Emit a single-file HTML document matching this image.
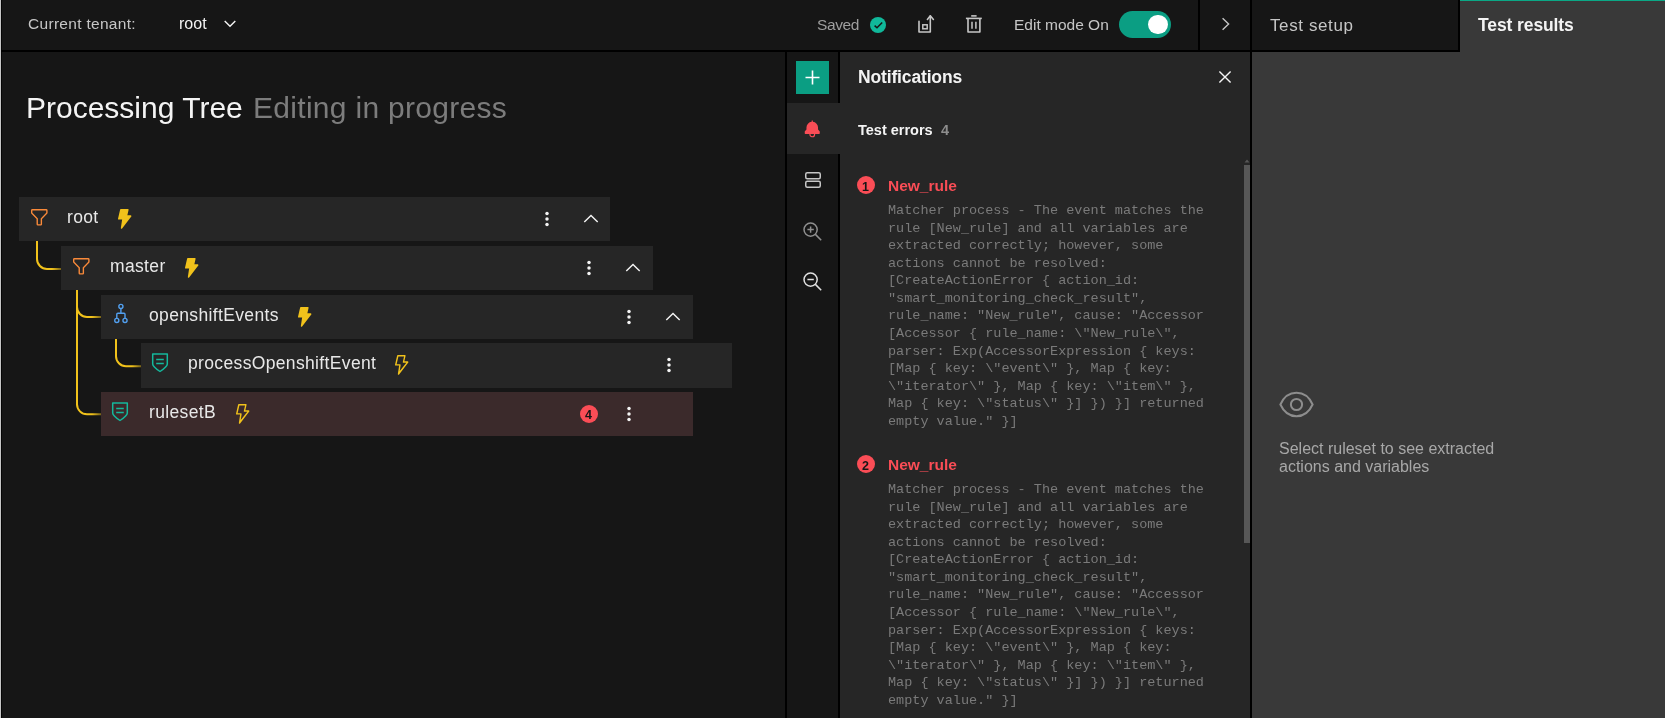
<!DOCTYPE html>
<html><head><meta charset="utf-8">
<style>
html,body{margin:0;padding:0;}
body{width:1665px;height:718px;overflow:hidden;background:#161616;position:relative;font-family:"Liberation Sans",sans-serif;}
.a{position:absolute;}
.t{position:absolute;line-height:1;white-space:nowrap;will-change:transform;}
.blk{position:absolute;background:#000;}
svg{position:absolute;overflow:visible;}
.row{position:absolute;height:44px;width:592px;background:#262626;}
.rt{position:absolute;will-change:transform;line-height:1;white-space:nowrap;font-size:17.5px;color:#e8e8e8;letter-spacing:0.35px;}
.mono{position:absolute;will-change:transform;left:888px;font-family:"Liberation Mono",monospace;font-size:13.5px;line-height:17.58px;color:#7a7a7a;white-space:pre;}
</style></head>
<body>
<!-- left edge -->
<div class="a" style="left:0;top:0;width:1px;height:718px;background:#c6c6c6"></div>
<div class="a" style="left:1px;top:0;width:1px;height:718px;background:#050505"></div>

<!-- header -->
<div class="t" style="left:27.8px;top:15.9px;font-size:15.5px;color:#c6c6c6;letter-spacing:0.3px">Current tenant:</div>
<div class="t" style="left:178.6px;top:15.5px;font-size:16px;color:#f4f4f4">root</div>
<svg style="left:224px;top:20px" width="12" height="8" viewBox="0 0 12 8"><path d="M0.7 0.9 L6 6.3 L11.3 0.9" fill="none" stroke="#f4f4f4" stroke-width="1.4"/></svg>

<div class="t" style="left:817.3px;top:16.9px;font-size:15.5px;color:#9e9e9e;letter-spacing:-0.4px">Saved</div>
<svg style="left:869.6px;top:16.8px" width="16" height="16" viewBox="0 0 16 16"><circle cx="8" cy="8" r="8" fill="#10b89a"/><path d="M4.6 8.6 L7 10.8 L12.2 5.5" fill="none" stroke="#161616" stroke-width="1.5"/></svg>
<!-- export icon -->
<svg style="left:912px;top:10px" width="28" height="28" viewBox="0 0 28 28"><path d="M7 11.2 V22 H18.3 V6" fill="none" stroke="#c6c6c6" stroke-width="1.6" stroke-linejoin="round" stroke-linecap="round"/><path d="M15.4 9.4 L18.3 5.8 L21.4 9.4" fill="none" stroke="#c6c6c6" stroke-width="1.6" stroke-linejoin="round" stroke-linecap="round"/><rect x="10.8" y="14.8" width="4.4" height="4.0" fill="none" stroke="#c6c6c6" stroke-width="1.5"/></svg>
<!-- trash icon -->
<svg style="left:960px;top:10px" width="28" height="28" viewBox="0 0 28 28"><path d="M11.2 5.9 H16.6" stroke="#c6c6c6" stroke-width="1.6"/><path d="M5.9 8.4 H21.8" stroke="#c6c6c6" stroke-width="1.6"/><path d="M8 8.4 V22 H19.9 V8.4" fill="none" stroke="#c6c6c6" stroke-width="1.6" stroke-linejoin="round"/><path d="M12 11.7 V18.7 M15.9 11.7 V18.7" stroke="#c6c6c6" stroke-width="1.5"/></svg>

<div class="t" style="left:1014px;top:16.9px;font-size:15.5px;color:#c6c6c6;letter-spacing:0px">Edit mode On</div>
<div class="a" style="left:1119px;top:11px;width:52px;height:27px;border-radius:14px;background:#0b9e83"></div>
<div class="a" style="left:1148px;top:14.8px;width:19.6px;height:19.6px;border-radius:50%;background:#fff"></div>

<div class="blk" style="left:1198px;top:0;width:2px;height:50px"></div>
<svg style="left:1216px;top:16px" width="16" height="16" viewBox="0 0 16 16"><path d="M6.6 2.2 L12.6 8 L6.6 13.8" fill="none" stroke="#c6c6c6" stroke-width="1.4"/></svg>
<div class="blk" style="left:1250px;top:0;width:2px;height:718px"></div>

<div class="t" style="left:1269.6px;top:17.4px;font-size:17px;color:#c6c6c6;letter-spacing:0.6px">Test setup</div>
<div class="blk" style="left:1458px;top:0;width:2px;height:52px"></div>
<div class="a" style="left:1460px;top:0;width:205px;height:718px;background:#393939"></div>
<div class="a" style="left:1460px;top:0;width:205px;height:1px;background:#0ba886"></div>
<div class="t" style="left:1478px;top:16.8px;font-size:17.5px;font-weight:700;color:#f4f4f4;letter-spacing:-0.1px">Test results</div>

<!-- header bottom border -->
<div class="blk" style="left:1px;top:50px;width:1459px;height:2px"></div>

<!-- tree area -->
<div class="blk" style="left:785px;top:52px;width:2px;height:666px"></div>
<div class="t" style="left:25.5px;top:92.6px;font-size:30px;color:#f4f4f4">Processing Tree</div>
<div class="t" style="left:253px;top:92.6px;font-size:30px;color:#7c7c7c;letter-spacing:0.3px">Editing in progress</div>

<!-- tree connectors -->
<svg style="left:0;top:0" width="800" height="500" viewBox="0 0 800 500"><defs><linearGradient id="g0" gradientUnits="userSpaceOnUse" x1="52" y1="0" x2="61" y2="0"><stop offset="0" stop-color="#f1c21b"/><stop offset="1" stop-color="#f1c21b" stop-opacity="0.45"/></linearGradient><linearGradient id="g1" gradientUnits="userSpaceOnUse" x1="92" y1="0" x2="101" y2="0"><stop offset="0" stop-color="#f1c21b"/><stop offset="1" stop-color="#f1c21b" stop-opacity="0.45"/></linearGradient><linearGradient id="g2" gradientUnits="userSpaceOnUse" x1="92" y1="0" x2="101" y2="0"><stop offset="0" stop-color="#f1c21b"/><stop offset="1" stop-color="#f1c21b" stop-opacity="0.45"/></linearGradient><linearGradient id="g3" gradientUnits="userSpaceOnUse" x1="132" y1="0" x2="141" y2="0"><stop offset="0" stop-color="#f1c21b"/><stop offset="1" stop-color="#f1c21b" stop-opacity="0.45"/></linearGradient></defs><g fill="none" stroke-width="2"><path d="M37 241 V259 A10 10 0 0 0 47 269 H62" stroke="url(#g0)"/><path d="M77 290 V404.3 A10 10 0 0 0 87 414.3 H102" stroke="url(#g1)"/><path d="M77 307 A10 10 0 0 0 87 317 H102" stroke="url(#g2)"/><path d="M116 338.5 V356.2 A10 10 0 0 0 126 366.2 H142" stroke="url(#g3)"/></g></svg>
<div class="row" style="left:19px;top:197px;width:591px;background:#262626"></div>
<svg style="left:30.50px;top:209.30px" width="16.6" height="16.6" viewBox="4 4 24 24"><path d="M18,28H14a2,2,0,0,1-2-2V18.41L4.59,11A2,2,0,0,1,4,9.59V6A2,2,0,0,1,6,4H26a2,2,0,0,1,2,2V9.59A2,2,0,0,1,27.41,11L20,18.41V26A2,2,0,0,1,18,28ZM6,6V9.59l8,8V26h4V17.59l8-8V6Z" fill="#fa8a3a"/></svg>
<div class="rt" style="left:66.7px;top:209.00px">root</div>
<svg style="left:117.7px;top:209.1px" width="13.4" height="19.8" viewBox="7 2 18.9 28"><path d="M11.61,29.92a1,1,0,0,1-.6-1.07L12.83,17H8a1,1,0,0,1-1-1.23l3-13A1,1,0,0,1,11,2H21a1,1,0,0,1,.98,1.2L20.22,11H25a1,1,0,0,1,.78,1.62l-13,17A1,1,0,0,1,12,30,1.1,1.1,0,0,1,11.61,29.92Z" fill="#f1c21b"/></svg>
<svg style="left:544px;top:210px" width="6" height="18" viewBox="0 0 6 18"><circle cx="3" cy="3.5" r="1.75" fill="#f4f4f4"/><circle cx="3" cy="9" r="1.75" fill="#f4f4f4"/><circle cx="3" cy="14.5" r="1.75" fill="#f4f4f4"/></svg>
<svg style="left:583px;top:212.00px" width="16" height="16" viewBox="0 0 16 16"><path d="M1.3 10.1 L8 3.4 L14.7 10.1" fill="none" stroke="#f4f4f4" stroke-width="1.4"/></svg>
<div class="row" style="left:61px;top:245.75px;width:592px;background:#262626"></div>
<svg style="left:72.50px;top:258.05px" width="16.6" height="16.6" viewBox="4 4 24 24"><path d="M18,28H14a2,2,0,0,1-2-2V18.41L4.59,11A2,2,0,0,1,4,9.59V6A2,2,0,0,1,6,4H26a2,2,0,0,1,2,2V9.59A2,2,0,0,1,27.41,11L20,18.41V26A2,2,0,0,1,18,28ZM6,6V9.59l8,8V26h4V17.59l8-8V6Z" fill="#fa8a3a"/></svg>
<div class="rt" style="left:109.5px;top:257.75px">master</div>
<svg style="left:184.7px;top:257.85px" width="13.4" height="19.8" viewBox="7 2 18.9 28"><path d="M11.61,29.92a1,1,0,0,1-.6-1.07L12.83,17H8a1,1,0,0,1-1-1.23l3-13A1,1,0,0,1,11,2H21a1,1,0,0,1,.98,1.2L20.22,11H25a1,1,0,0,1,.78,1.62l-13,17A1,1,0,0,1,12,30,1.1,1.1,0,0,1,11.61,29.92Z" fill="#f1c21b"/></svg>
<svg style="left:586px;top:258.75px" width="6" height="18" viewBox="0 0 6 18"><circle cx="3" cy="3.5" r="1.75" fill="#f4f4f4"/><circle cx="3" cy="9" r="1.75" fill="#f4f4f4"/><circle cx="3" cy="14.5" r="1.75" fill="#f4f4f4"/></svg>
<svg style="left:625px;top:260.75px" width="16" height="16" viewBox="0 0 16 16"><path d="M1.3 10.1 L8 3.4 L14.7 10.1" fill="none" stroke="#f4f4f4" stroke-width="1.4"/></svg>
<div class="row" style="left:101px;top:294.5px;width:592px;background:#262626"></div>
<svg style="left:110.10px;top:300.90px" width="22" height="24" viewBox="0 0 22 24"><g fill="none" stroke="#52a0f0" stroke-width="1.4"><circle cx="10.9" cy="5.4" r="2.05"/><circle cx="6.8" cy="19.4" r="2.05"/><circle cx="15" cy="19.4" r="2.05"/><path d="M10.9 7.45 V12.3 M6.8 17.35 V13.3 Q6.8 12.3 7.8 12.3 H14 Q15 12.3 15 13.3 V17.35"/></g></svg>
<div class="rt" style="left:148.8px;top:306.50px">openshiftEvents</div>
<svg style="left:297.8px;top:306.6px" width="13.4" height="19.8" viewBox="7 2 18.9 28"><path d="M11.61,29.92a1,1,0,0,1-.6-1.07L12.83,17H8a1,1,0,0,1-1-1.23l3-13A1,1,0,0,1,11,2H21a1,1,0,0,1,.98,1.2L20.22,11H25a1,1,0,0,1,.78,1.62l-13,17A1,1,0,0,1,12,30,1.1,1.1,0,0,1,11.61,29.92Z" fill="#f1c21b"/></svg>
<svg style="left:626px;top:307.5px" width="6" height="18" viewBox="0 0 6 18"><circle cx="3" cy="3.5" r="1.75" fill="#f4f4f4"/><circle cx="3" cy="9" r="1.75" fill="#f4f4f4"/><circle cx="3" cy="14.5" r="1.75" fill="#f4f4f4"/></svg>
<svg style="left:665px;top:309.50px" width="16" height="16" viewBox="0 0 16 16"><path d="M1.3 10.1 L8 3.4 L14.7 10.1" fill="none" stroke="#f4f4f4" stroke-width="1.4"/></svg>
<div class="row" style="left:141px;top:343px;width:591px;height:45px;background:#262626"></div>
<svg style="left:151px;top:352.25px" width="20" height="22" viewBox="0 0 20 22"><path d="M1.7 1.9 H16.3 V12 Q16.3 14.6 9 19.5 Q1.7 14.6 1.7 12 Z" fill="none" stroke="#14b89c" stroke-width="1.5" stroke-linejoin="round"/><path d="M5.2 7.4 H12.8 M5.2 11.5 H12.8" stroke="#14b89c" stroke-width="1.5"/></svg>
<div class="rt" style="left:188.4px;top:355.25px">processOpenshiftEvent</div>
<svg style="left:394.6px;top:355.35px" width="13.4" height="19.8" viewBox="7 2 18.9 28"><path d="M11.61,29.92a1,1,0,0,1-.6-1.07L12.83,17H8a1,1,0,0,1-1-1.23l3-13A1,1,0,0,1,11,2H21a1,1,0,0,1,.98,1.2L20.22,11H25a1,1,0,0,1,.78,1.62l-13,17A1,1,0,0,1,12,30,1.1,1.1,0,0,1,11.61,29.92ZM9.26,15H14a1,1,0,0,1,1,1.15L13.68,24.8,23,13H19a1,1,0,0,1-1-1.2L19.78,4H11.8Z" fill="#f1c21b" fill-rule="evenodd"/></svg>
<svg style="left:666px;top:356.25px" width="6" height="18" viewBox="0 0 6 18"><circle cx="3" cy="3.5" r="1.75" fill="#f4f4f4"/><circle cx="3" cy="9" r="1.75" fill="#f4f4f4"/><circle cx="3" cy="14.5" r="1.75" fill="#f4f4f4"/></svg>
<div class="row" style="left:101px;top:392px;width:592px;background:#3b2a2b"></div>
<svg style="left:111px;top:401px" width="20" height="22" viewBox="0 0 20 22"><path d="M1.7 1.9 H16.3 V12 Q16.3 14.6 9 19.5 Q1.7 14.6 1.7 12 Z" fill="none" stroke="#14b89c" stroke-width="1.5" stroke-linejoin="round"/><path d="M5.2 7.4 H12.8 M5.2 11.5 H12.8" stroke="#14b89c" stroke-width="1.5"/></svg>
<div class="rt" style="left:149.1px;top:404.00px">rulesetB</div>
<svg style="left:235.8px;top:404.1px" width="13.4" height="19.8" viewBox="7 2 18.9 28"><path d="M11.61,29.92a1,1,0,0,1-.6-1.07L12.83,17H8a1,1,0,0,1-1-1.23l3-13A1,1,0,0,1,11,2H21a1,1,0,0,1,.98,1.2L20.22,11H25a1,1,0,0,1,.78,1.62l-13,17A1,1,0,0,1,12,30,1.1,1.1,0,0,1,11.61,29.92ZM9.26,15H14a1,1,0,0,1,1,1.15L13.68,24.8,23,13H19a1,1,0,0,1-1-1.2L19.78,4H11.8Z" fill="#f1c21b" fill-rule="evenodd"/></svg>
<svg style="left:626px;top:405px" width="6" height="18" viewBox="0 0 6 18"><circle cx="3" cy="3.5" r="1.75" fill="#f4f4f4"/><circle cx="3" cy="9" r="1.75" fill="#f4f4f4"/><circle cx="3" cy="14.5" r="1.75" fill="#f4f4f4"/></svg>
<div class="a" style="left:580px;top:405px;width:18.2px;height:18.2px;border-radius:50%;background:#fa4d56"></div>
<div class="t" style="left:585px;top:409px;font-size:12.5px;font-weight:700;color:#161616">4</div>

<!-- sidebar -->
<div class="blk" style="left:838px;top:52px;width:2px;height:51px"></div>
<div class="blk" style="left:838px;top:154px;width:2px;height:564px"></div>
<div class="a" style="left:796px;top:61px;width:33px;height:33px;background:#0b9e83"></div>
<svg style="left:796px;top:61px" width="33" height="33" viewBox="0 0 33 33"><path d="M16.5 9.5 V23.5 M9.5 16.5 H23.5" stroke="#fff" stroke-width="1.6"/></svg>

<!-- notifications panel -->
<div class="a" style="left:840px;top:52px;width:410px;height:666px;background:#262626"></div>
<div class="a" style="left:1252px;top:52px;width:208px;height:666px;background:#393939"></div>
<div class="a" style="left:787px;top:103px;width:53px;height:51px;background:#262626"></div>
<svg style="left:803.3px;top:120.4px" width="18.5" height="18.5" viewBox="0 0 32 32"><path d="M28.7071,19.293,26,16.5859V13a10.0136,10.0136,0,0,0-9-9.9492V1H15V3.0508A10.0136,10.0136,0,0,0,6,13v3.5859L3.2929,19.293A1,1,0,0,0,3,20v3a1,1,0,0,0,1,1h7v.7768a5.152,5.152,0,0,0,4.5,5.1987A5.0057,5.0057,0,0,0,21,25V24h7a1,1,0,0,0,1-1V20A1,1,0,0,0,28.7071,19.293ZM19,25a3,3,0,0,1-6,0V24h6Z" fill="#fa4d56"/></svg>
<svg style="left:805px;top:172px" width="16" height="16" viewBox="0 0 16 16"><g fill="none" stroke="#c6c6c6" stroke-width="1.5"><rect x="0.75" y="0.75" width="14.5" height="6" rx="1.5"/><rect x="0.75" y="9.25" width="14.5" height="6" rx="1.5"/></g></svg>
<svg style="left:803px;top:222px" width="19" height="19" viewBox="0 0 19 19"><g fill="none" stroke="#8f8f8f" stroke-width="1.5"><circle cx="7.6" cy="7.6" r="6.6"/><path d="M12.4 12.4 L18.2 18.2 M7.6 4.4 V10.8 M4.4 7.6 H10.8"/></g></svg>
<svg style="left:803px;top:272px" width="19" height="19" viewBox="0 0 19 19"><g fill="none" stroke="#e0e0e0" stroke-width="1.5"><circle cx="7.6" cy="7.6" r="6.6"/><path d="M12.4 12.4 L18.2 18.2 M4.4 7.6 H10.8"/></g></svg>
<div class="t" style="left:857.6px;top:69.2px;font-size:17.5px;font-weight:700;color:#f4f4f4;letter-spacing:-0.15px">Notifications</div>
<svg style="left:1217px;top:69px" width="16" height="16" viewBox="0 0 16 16"><path d="M2.4 2.4 L13.6 13.6 M13.6 2.4 L2.4 13.6" stroke="#f4f4f4" stroke-width="1.4"/></svg>
<div class="t" style="left:858.2px;top:122.5px;font-size:14.5px;font-weight:700;color:#f4f4f4">Test errors</div>
<div class="t" style="left:941.2px;top:122.5px;font-size:14.5px;font-weight:700;color:#8d8d8d">4</div>
<div class="a" style="left:1244px;top:165px;width:6px;height:378px;background:#575757"></div>
<svg style="left:1244px;top:159px" width="6" height="4" viewBox="0 0 6 4"><path d="M0.5 3.5 L3 0.5 L5.5 3.5 Z" fill="#575757"/></svg>
<div class="a" style="left:857px;top:176px;width:18px;height:18px;border-radius:50%;background:#fa4d56"></div>
<div class="t" style="left:861.8px;top:180.8px;font-size:12.5px;font-weight:700;color:#161616">1</div>
<div class="t" style="left:888px;top:178.0px;font-size:15.5px;font-weight:700;color:#fa4d56">New_rule</div>
<div class="mono" style="top:202px">Matcher process - The event matches the
rule [New_rule] and all variables are
extracted correctly; however, some
actions cannot be resolved:
[CreateActionError { action_id:
"smart_monitoring_check_result",
rule_name: "New_rule", cause: "Accessor
[Accessor { rule_name: \"New_rule\",
parser: Exp(AccessorExpression { keys:
[Map { key: \"event\" }, Map { key:
\"iterator\" }, Map { key: \"item\" },
Map { key: \"status\" }] }) }] returned
empty value." }]</div>
<div class="a" style="left:857px;top:455px;width:18px;height:18px;border-radius:50%;background:#fa4d56"></div>
<div class="t" style="left:861.8px;top:459.8px;font-size:12.5px;font-weight:700;color:#161616">2</div>
<div class="t" style="left:888px;top:457.0px;font-size:15.5px;font-weight:700;color:#fa4d56">New_rule</div>
<div class="mono" style="top:481px">Matcher process - The event matches the
rule [New_rule] and all variables are
extracted correctly; however, some
actions cannot be resolved:
[CreateActionError { action_id:
"smart_monitoring_check_result",
rule_name: "New_rule", cause: "Accessor
[Accessor { rule_name: \"New_rule\",
parser: Exp(AccessorExpression { keys:
[Map { key: \"event\" }, Map { key:
\"iterator\" }, Map { key: \"item\" },
Map { key: \"status\" }] }) }] returned
empty value." }]</div>
<svg style="left:1278px;top:390px" width="37" height="28" viewBox="0 0 37 28"><g fill="none" stroke="#8d8d8d" stroke-width="2"><path d="M2.4 14.5 C6 6.5 12 2.8 18.5 2.8 C25 2.8 31 6.5 34.6 14.5 C31 22.5 25 26.2 18.5 26.2 C12 26.2 6 22.5 2.4 14.5 Z"/><circle cx="18.5" cy="14.5" r="5.6"/></g></svg>
<div class="t" style="left:1279px;top:439.9px;font-size:16px;color:#a8a8a8;line-height:17.7px">Select ruleset to see extracted<br>actions and variables</div>
</body></html>
